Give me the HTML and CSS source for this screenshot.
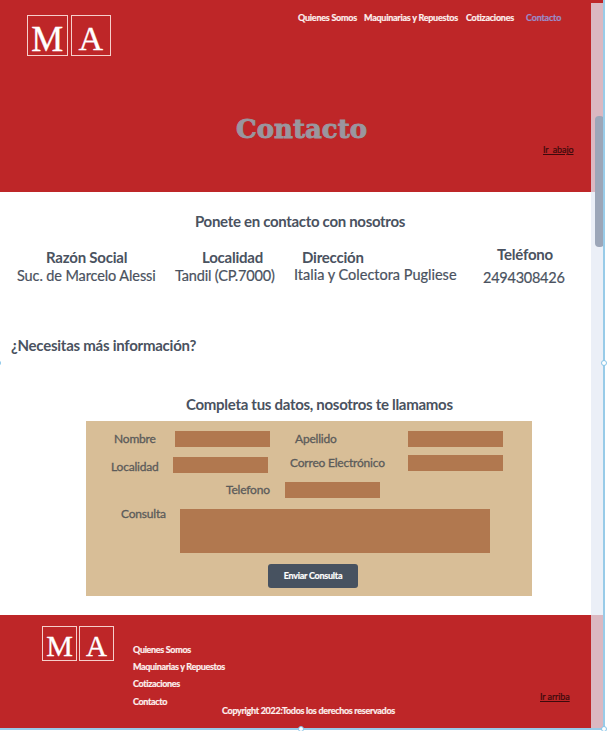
FILE: index.html
```html
<!DOCTYPE html>
<html lang="es">
<head>
<meta charset="utf-8">
<title>Contacto</title>
<link rel="stylesheet" href="styles.css">
</head>
<body>
<div class="page">
  <header class="hero">
    <div class="topbar">
      <div class="logo"><span class="m">M</span><span class="a">A</span></div>
      <nav class="nav">
        <a class="n1">Quienes Somos</a><a class="n2">Maquinarias y Repuestos</a><a class="n3">Cotizaciones</a><a class="n4">Contacto</a>
      </nav>
    </div>
    <h1>Contacto</h1>
    <a class="jump down">Ir&nbsp; abajo</a>
  </header>
  <main>
    <h2 class="lead">Ponete en contacto con nosotros</h2>
    <section class="info">
      <div class="c1"><h3>Razón Social</h3><p>Suc. de Marcelo Alessi</p></div>
      <div class="c2"><h3>Localidad</h3><p>Tandil (CP.7000)</p></div>
      <div class="c3"><h3>Dirección</h3><p>Italia y Colectora Pugliese</p></div>
      <div class="c4"><h3>Teléfono</h3><p>2494308426</p></div>
    </section>
    <h2 class="more">¿Necesitas más información?</h2>
    <h2 class="fill">Completa tus datos, nosotros te llamamos</h2>
    <form class="form">
      <div class="row r1"><label class="nombre">Nombre</label><i class="field"></i><label class="apellido">Apellido</label><i class="field"></i></div>
      <div class="row r2"><label class="localidad">Localidad</label><i class="field low"></i><label class="correo">Correo Electrónico</label><i class="field high"></i></div>
      <div class="row r3"><label class="telefono">Telefono</label><i class="field"></i></div>
      <div class="row r4"><label class="consulta">Consulta</label><i class="field area"></i></div>
      <button type="button"><span>Enviar Consulta</span></button>
    </form>
  </main>
  <footer class="foot">
    <div class="logo small"><span class="m">M</span><span class="a">A</span></div>
    <nav class="links"><a class="f1">Quienes Somos</a><a class="f2">Maquinarias y Repuestos</a><a class="f3">Cotizaciones</a><a class="f4">Contacto</a></nav>
    <p class="copy">Copyright 2022:Todos los derechos reservados</p>
    <a class="jump up">Ir arriba</a>
  </footer>
  <div class="track"><div class="thumb"></div></div>
  <div class="selection"><b class="left"></b><b class="right"></b><b class="bottom"></b><b class="corner"></b></div>
</div>
</body>
</html>
```

FILE: styles.css
```css
* { box-sizing: border-box; }
body { margin: 0; background: #fff; font-family: Lato, "Liberation Sans", sans-serif; color: #4a5260; }
h1, h2, h3, p { margin: 0; }
h1, h2, h3, p, a, label, button { white-space: nowrap; }
.page { position: relative; width: 607px; height: 731px; overflow: hidden; }
.hero { width: 604px; height: 192px; background: #be2628; }
.topbar { display: flex; height: 114px; padding: 15px 0 0 27px; }
.logo { display: flex; gap: 3px; height: 41px; width: 84px; }
.logo span { flex: 1; border: 1px solid #f6cfcb; color: #fff; font: 36px/46px "Liberation Serif", serif; text-align: center; -webkit-text-stroke: .3px #fff; }
.logo .m { font-size: 36px; letter-spacing: -2px; text-indent: -2px; }
.logo .a { font-size: 34px; line-height: 46px; }
.nav { display: flex; margin-left: 187px; height: 12px; margin-top: -3px; font-size: 9px; line-height: 12px; font-weight: 700; color: #fdf1ef; -webkit-text-stroke: .2px; }
.nav a { letter-spacing: -.25px; }
.n1 { width: 66px; }
.n2 { width: 102px; }
.n3 { width: 60px; }
.nav .n4 { color: #9b8dc8; letter-spacing: -.2px; }
h1 { height: 31px; margin-left: 236px; font: 700 26px/30px "DejaVu Serif", serif; letter-spacing: 0; color: #9a969e; -webkit-text-stroke: .9px #9a969e; }
.jump { display: block; width: max-content; font-size: 9px; line-height: 10px; letter-spacing: -.1px; color: #3c0a0c; text-decoration: underline; -webkit-text-stroke: .2px; }
.down { margin-left: 543px; }
main { height: 423px; }
h2, h3 { font-size: 15px; line-height: 18px; font-weight: 700; letter-spacing: -.31px; }
h3 { letter-spacing: -.22px; }
.lead { padding: 20px 0 0 195px; height: 54px; }
.info { display: flex; height: 90px; }
.info p { font-size: 14.5px; line-height: 18px; letter-spacing: -.11px; margin-top: 1px; -webkit-text-stroke: .2px #4a5260; }
.c1 { width: 175px; padding-left: 17px; }
.c1 h3 { padding-left: 29px; }
.c2 { width: 119px; }
.c2 h3 { padding-left: 27px; }
.c2 p { letter-spacing: -.16px; }
.c3 { width: 189px; }
.c3 h3 { padding-left: 8px; }
.c1, .c2, .c3 { padding-top: 2px; }
.info .c3 p { margin-top: 0; letter-spacing: 0; }
.c4 { margin-top: -1px; }
.c4 h3 { padding-left: 14px; }
.info .c4 p { margin-top: 6px; letter-spacing: -.25px; }
.more { height: 59px; padding-left: 11px; letter-spacing: -.25px; }
.fill { height: 26px; padding-left: 186px; letter-spacing: -.29px; }
.form { width: 446px; height: 175px; margin-left: 86px; background: #d8be97; }
.row { display: flex; }
.row label { font-size: 12px; line-height: 16px; letter-spacing: -.2px; color: #5b5b5a; -webkit-text-stroke: .3px #5b5b5a; }
.field { width: 95px; height: 16px; background: #b1784f; }
.r1 { height: 35px; padding: 10px 0 0 28px; }
.nombre { width: 61px; }
.apellido { width: 113px; margin-left: 25px; }
.r2 { height: 26px; padding-left: 25px; }
.localidad { width: 62px; padding-top: 3px; }
.field.low { margin-top: 1px; }
.field.high { margin-top: -1px; }
.correo { width: 118px; margin-left: 22px; margin-top: -1px; }
.r3 { height: 27px; padding-left: 140px; }
.telefono { width: 59px; }
.r4 { height: 55px; padding-left: 35px; }
.consulta { width: 59px; margin-top: -3px; }
.area { width: 310px; height: 44px; }
button { display: block; width: 90px; height: 24px; margin-left: 182px; padding: 0; border: 0; border-radius: 3px; background: #475260; color: #fff; font: 700 9px/24px Lato, sans-serif; letter-spacing: -.25px; text-align: center; -webkit-text-stroke: .2px; }
.foot { display: flex; width: 604px; height: 114px; padding: 11px 0 0 42px; background: #be2628; color: #fdf1ef; font-size: 9px; -webkit-text-stroke: .2px; }
.small { width: 72px; height: 35px; gap: 2px; }
.small .m { font-size: 30px; line-height: 38px; }
.small .a { font-size: 29px; line-height: 38px; }
.links { display: flex; flex-direction: column; margin-left: 19px; width: 89px; padding-top: 18px; font-weight: 700; line-height: 12px; letter-spacing: -.33px; }
.f1, .f2 { height: 17px; }
.f3 { height: 18px; }
.copy { margin-top: 79px; width: 318px; font-weight: 700; line-height: 12px; letter-spacing: -.3px; }
.up { margin-top: 66px; }
.track { position: absolute; left: 591px; top: 3px; width: 13px; height: 725px; padding: 113px 0 0 4px; background: rgba(228, 234, 244, .75); }
.thumb { width: 9px; height: 131px; border-radius: 4px; background: #9ca6b8; }
.selection { position: absolute; left: -2px; top: -2px; width: 607px; height: 732px; border: solid #98cbe8; border-width: 0 2px 2px 0; }
.selection b { position: absolute; width: 6px; height: 6px; border: 1px solid #85c4e8; border-radius: 50%; background: #fff; }
.selection .left { left: -3px; top: 362px; }
.selection .right { right: -4px; top: 362px; }
.selection .bottom { left: 300px; bottom: -4px; }
.selection .corner { right: -4px; bottom: -4px; }
```
